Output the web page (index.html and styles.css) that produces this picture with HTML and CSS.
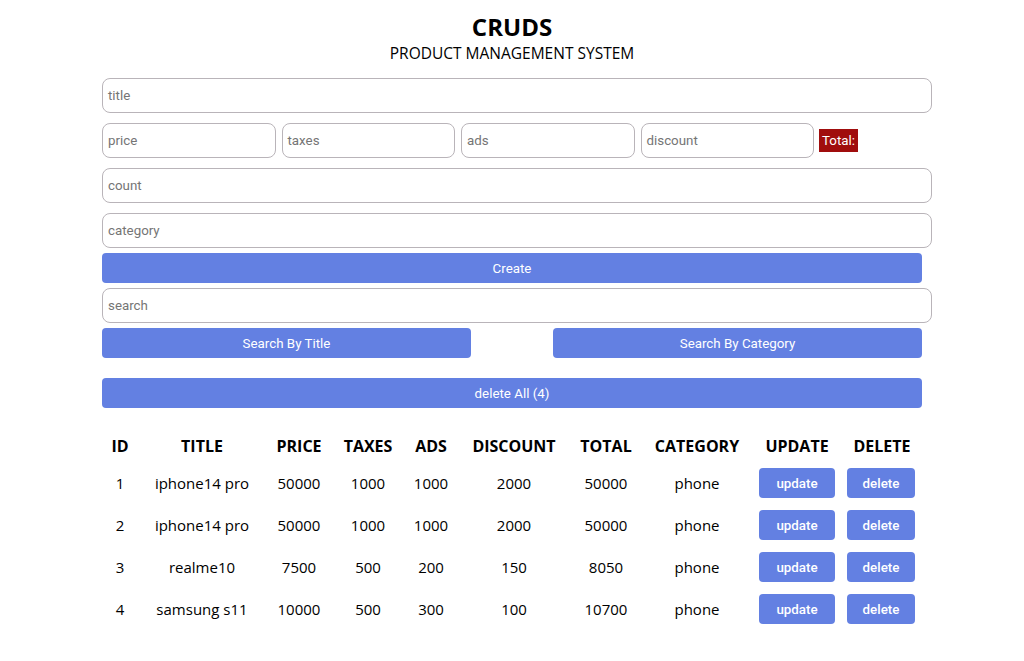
FILE: index.html
```html
<!DOCTYPE html>
<html>
<head>
<meta charset="utf-8">
<link rel="stylesheet" href="styles.css">
</head>
<body>
<div class="crud">
  <div class="head">
    <h2>CRUDS</h2>
    <p>PRODUCT MANAGEMENT SYSTEM</p>
  </div>
  <div class="inputs">
    <input type="text" placeholder="title">
    <div class="price">
      <input type="number" placeholder="price">
      <input type="number" placeholder="taxes">
      <input type="number" placeholder="ads">
      <input type="number" placeholder="discount">
      <small class="total">Total:</small>
    </div>
    <input type="number" placeholder="count">
    <input type="text" placeholder="category">
    <button class="btn">Create</button>
  </div>
  <div class="output">
    <div class="searchBlock">
      <input type="text" placeholder="search">
      <div class="btnSearch">
        <button class="btn">Search By Title</button>
        <button class="btn">Search By Category</button>
      </div>
    </div>
    <div class="deleteAll">
      <button class="btn">delete All (4)</button>
    </div>
    <table>
      <colgroup>
        <col class="c-id"><col class="c-title"><col class="c-price"><col class="c-taxes"><col class="c-ads"><col class="c-discount"><col class="c-total"><col class="c-category"><col class="c-update"><col class="c-delete">
      </colgroup>
      <tr>
        <th>ID</th><th>TITLE</th><th>PRICE</th><th>TAXES</th><th>ADS</th><th>DISCOUNT</th><th>TOTAL</th><th>CATEGORY</th><th>UPDATE</th><th>DELETE</th>
      </tr>
      <tr>
        <td>1</td><td>iphone14 pro</td><td>50000</td><td>1000</td><td>1000</td><td>2000</td><td>50000</td><td>phone</td>
        <td><button class="btn small upd">update</button></td><td><button class="btn small del">delete</button></td>
      </tr>
      <tr>
        <td>2</td><td>iphone14 pro</td><td>50000</td><td>1000</td><td>1000</td><td>2000</td><td>50000</td><td>phone</td>
        <td><button class="btn small upd">update</button></td><td><button class="btn small del">delete</button></td>
      </tr>
      <tr>
        <td>3</td><td>realme10</td><td>7500</td><td>500</td><td>200</td><td>150</td><td>8050</td><td>phone</td>
        <td><button class="btn small upd">update</button></td><td><button class="btn small del">delete</button></td>
      </tr>
      <tr>
        <td>4</td><td>samsung s11</td><td>10000</td><td>500</td><td>300</td><td>100</td><td>10700</td><td>phone</td>
        <td><button class="btn small upd">update</button></td><td><button class="btn small del">delete</button></td>
      </tr>
    </table>
  </div>
</div>
</body>
</html>
```
FILE: styles.css
```css
* { margin: 0; padding: 0; }
body {
  margin: 0;
  background: #fff;
  font-family: "Open Sans", "Noto Sans", sans-serif;
  color: #000;
}
.crud {
  width: 820px;
  margin: 0 auto;
  padding-top: 12px;
}
.head {
  text-align: center;
}
.head h2 {
  font-size: 24px;
  font-weight: 700;
  line-height: 30px;
}
.head p {
  font-size: 15.5px;
  line-height: 20px;
  text-transform: uppercase;
  margin-top: 1px;
  margin-bottom: 15px;
}
input {
  display: block;
  width: 100%;
  box-sizing: content-box;
  padding: 0 4px;
  height: 33px;
  border: 1px solid #b9b4b9;
  border-radius: 8px;
  font-family: Roboto, "Liberation Sans", sans-serif;
  font-size: 13.33px;
  text-indent: 1px;
  color: #333;
  outline: none;
  margin-bottom: 10px;
  background: #fff;
}
input::placeholder { color: #757575; }
.price {
  display: flex;
  align-items: center;
  gap: 6px;
  margin-bottom: 10px;
}
.price input {
  width: 163.5px;
  margin-bottom: 0;
}
.total {
  background: #a00d0d;
  color: #fff;
  font-family: Roboto, "Liberation Sans", sans-serif;
  font-size: 13.33px;
  padding: 3px 3px;
  line-height: 17px;
  margin-left: -1px;
}
.btn {
  display: block;
  width: 100%;
  height: 30px;
  border: none;
  border-radius: 4px;
  background: #6380e2;
  color: #fff;
  font-family: Roboto, "Liberation Sans", sans-serif;
  font-size: 13.33px;
  cursor: pointer;
}
.inputs .btn {
  margin-top: -5px;
  margin-bottom: 5px;
}
.btnSearch {
  display: flex;
  justify-content: space-between;
  margin-top: -5px;
}
.btnSearch .btn { width: 45%; }
.deleteAll { margin-top: 20px; margin-bottom: 21px; }
table {
  width: 100%;
  table-layout: fixed;
  border-collapse: collapse;
  text-align: center;
}
.c-id { width: 36px; }
.c-title { width: 128px; }
.c-price { width: 66px; }
.c-taxes { width: 72px; }
.c-ads { width: 54px; }
.c-discount { width: 112px; }
.c-total { width: 72px; }
.c-category { width: 110px; }
.c-update { width: 90px; }
.c-delete { width: 80px; }
th {
  font-size: 16px;
  font-weight: 700;
  padding: 6px 0 5px;
  height: 21px;
  white-space: nowrap;
}
td {
  font-size: 15px;
  padding: 6px 0;
  height: 30px;
  white-space: nowrap;
}
.btn.small {
  display: inline-block;
  height: 30px;
  font-size: 13.33px;
  font-weight: 500;
}
.upd { width: 76px; }
.del { width: 68px; margin-left: -2px; }
```
